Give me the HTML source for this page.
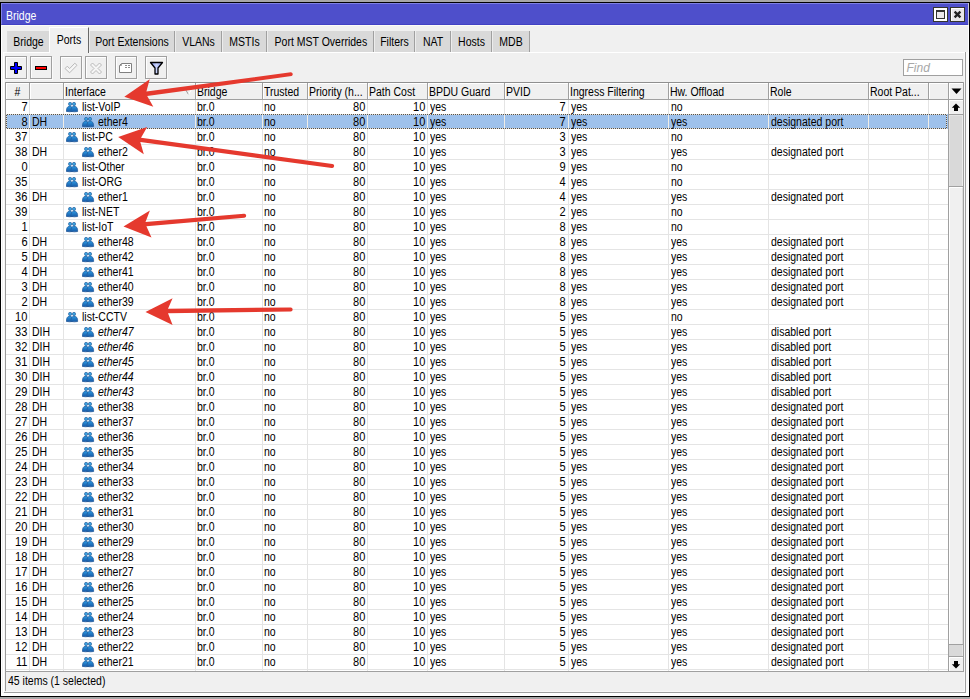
<!DOCTYPE html>
<html><head><meta charset="utf-8"><title>Bridge</title>
<style>
html,body{margin:0;padding:0}
body{width:970px;height:699px;overflow:hidden;background:#a7a7a7;position:relative;font:12px/15px "Liberation Sans",sans-serif;color:#000}
div,span,svg{position:absolute;box-sizing:border-box}
.t{white-space:nowrap;transform:scaleX(0.875);transform-origin:0 50%;line-height:15px;height:15px;top:1px}
.t.r{transform-origin:100% 50%}
.t.c{transform-origin:50% 50%}
.t.n{transform:scaleX(.92)}
#win{left:0;top:2px;width:970px;height:695px;background:#f0f0f0;border:1px solid #000}
#title{left:1px;top:3px;width:967px;height:22px;background:#4e4fcb;border-top:1px solid #7f81e3;border-left:1px solid #8284e6;border-bottom:1px solid #4141c3}
#title .t{color:#fff;top:5px;left:3.5px}
.wb{top:7px;width:15px;height:15px;border:1px solid #35352c;background:#fff}
.tab{top:31px;height:21px;background:#d9d9d9;border-right:1px solid #a0a0a0;border-left:1px solid #ececec}
.tab .t{top:4px;left:0;width:100%;text-align:center;transform-origin:50% 50%}
.tab.act{top:27px;height:26px;background:#f0f0f0;border-left:1px solid #fff;border-top:1px solid #fff;border-right:1px solid #696969}
.tab.act .t{top:5px}
.btn{top:56px;width:22px;height:23px;border:1px solid #a0a0a0;background:#f0f0f0;box-shadow:inset 1px 1px 0 #fff,1px 1px 0 #fafafa}
.btn svg{left:0;top:0}
.hl{left:6px;width:942px;height:1px;background:#e4e4e4}
.vl{top:100px;width:1px;height:571px;background:#e4e4e4}
.row{left:0;width:970px;height:15px}
.hc{top:83px;height:16px;background:#f0f0f0;border-top:1px solid #fff;border-left:1px solid #fff}
.hb{top:83px;width:1px;height:16px;background:#a0a0a0}
.ic{top:3px}
.i{font-style:italic}
#sel{left:6px;top:114px;width:942px;height:15px;background:#9ec1eb}
.dot{background-image:repeating-linear-gradient(90deg,#e6e0d4 0 1px,#505050 1px 2px)}
.dotv{background-image:repeating-linear-gradient(180deg,#e6e0d4 0 1px,#505050 1px 2px)}
</style></head><body>
<svg width="0" height="0" style="left:0;top:0"><defs>
<linearGradient id="g1" x1="0" y1="0" x2="0" y2="1"><stop offset="0" stop-color="#2d9ae2"/><stop offset="1" stop-color="#1759a6"/></linearGradient>
<linearGradient id="g2" x1="0" y1="0" x2="1" y2="0"><stop offset="0" stop-color="#7f92e8"/><stop offset=".5" stop-color="#c8d2fb"/><stop offset="1" stop-color="#7f92e8"/></linearGradient>
</defs></svg>
<div id="win"></div>
<div id="title"><span class="t">Bridge</span></div>

<div style="left:1px;top:25px;width:1px;height:671px;background:#fff"></div>
<div style="left:1px;top:25px;width:968px;height:1px;background:#fbfbf6"></div>
<div style="left:968px;top:3px;width:1px;height:22px;background:#c8c8d8"></div>
<div style="left:968px;top:25px;width:1px;height:671px;background:#fff"></div>
<div style="left:966px;top:52px;width:2px;height:643px;background:#f9f9f9"></div>
<div style="left:1px;top:693px;width:968px;height:3px;background:#fff"></div>
<div style="left:965px;top:52px;width:1px;height:641px;background:#a0a0a0"></div>
<div style="left:4px;top:692px;width:962px;height:1px;background:#a0a0a0"></div>
<div style="left:3px;top:52px;width:962px;height:1px;background:#fff"></div>
<div style="left:3px;top:52px;width:1px;height:640px;background:#fff"></div>
<div style="left:4px;top:53px;width:1px;height:639px;background:#f7f7f7"></div>
<div style="left:964px;top:53px;width:1px;height:639px;background:#f8f8f8"></div>
<div style="left:6px;top:691px;width:958px;height:1px;background:#f8f8f8"></div>
<div class="wb" style="left:933px"><div style="left:2px;top:2px;width:9px;height:9px;border:1px solid #333;border-top-width:2px;background:#ece9ec"></div></div>
<div class="wb" style="left:950px;background:#e9e7e9;box-shadow:inset 1px 1px 0 #fff"><svg width="13" height="13" style="left:0;top:0" viewBox="0 0 13 13"><path d="M3.6 3.6L9.4 9.4M9.4 3.6L3.6 9.4" stroke="#222" stroke-width="2.3" stroke-linecap="butt" fill="none"/></svg></div>
<div class="tab" style="left:7px;width:42px;border-right:0;border-left-color:#dbdbdb"><span class="t">Bridge</span></div>
<div class="tab act" style="left:49px;width:40px"><span class="t">Ports</span></div>
<div class="tab" style="left:89px;width:86px"><span class="t">Port Extensions</span></div>
<div class="tab" style="left:175px;width:47px"><span class="t">VLANs</span></div>
<div class="tab" style="left:222px;width:45px"><span class="t">MSTIs</span></div>
<div class="tab" style="left:267px;width:107px"><span class="t">Port MST Overrides</span></div>
<div class="tab" style="left:374px;width:41px"><span class="t">Filters</span></div>
<div class="tab" style="left:415px;width:36px"><span class="t">NAT</span></div>
<div class="tab" style="left:451px;width:41px"><span class="t">Hosts</span></div>
<div class="tab" style="left:492px;width:38px"><span class="t">MDB</span></div>
<div class="btn" style="left:5px"><svg width="20" height="21" viewBox="0 0 20 21"><path d="M8.5 5.5h3v4h4v3h-4v4h-3v-4h-4v-3h4z" fill="#0000ff" stroke="#000" stroke-width="1"/></svg></div>
<div class="btn" style="left:30px"><svg width="20" height="21" viewBox="0 0 20 21"><rect x="4.5" y="9.5" width="11" height="3" fill="#ff0000" stroke="#000" stroke-width="1"/></svg></div>
<div class="btn" style="left:60px"><svg width="20" height="21" viewBox="0 0 20 21"><path d="M4 11.5L6.3 9.2L8.6 11.6L13.8 6.2L16 8.3L8.6 15.8Z" fill="#f6f6f6" stroke="#b2b2b2" stroke-width=".9"/></svg></div>
<div class="btn" style="left:85px"><svg width="20" height="21" viewBox="0 0 20 21"><path d="M4.5 8l2-2 3.5 3.5 3.5-3.5 2 2-3.5 3.5 3.5 3.5-2 2-3.5-3.5-3.5 3.5-2-2 3.5-3.5z" fill="#f6f6f6" stroke="#b2b2b2" stroke-width=".9"/></svg></div>
<div class="btn" style="left:115px"><svg width="20" height="21" viewBox="0 0 20 21"><path d="M3.5 8.5l2-2h10v9h-12z" fill="#fff" stroke="#808080" stroke-width="1"/><path d="M3.5 8.5h2v-2" fill="none" stroke="#9a9a9a" stroke-width="1"/><path d="M9 8.5h2M12 8.5h2M9 10.5h2M12 10.5h2" stroke="#8c8c8c" stroke-width="1"/></svg></div>
<div class="btn" style="left:145px"><svg width="20" height="21" viewBox="0 0 20 21"><path d="M4.5 5.5h12l-4.5 5.5v6l-3 0v-6z" fill="url(#g2)" stroke="#000" stroke-width="1.3" stroke-linejoin="round"/></svg></div>
<div style="left:903px;top:59px;width:60px;height:17px;background:#fff;border:1px solid #a0a0a0"><span class="t i" style="left:2.5px;top:1px;color:#a8a8a8;transform:none">Find</span></div>
<div style="left:5px;top:82px;width:959px;height:1px;background:#8f8f8f"></div>
<div style="left:5px;top:82px;width:1px;height:609px;background:#9a9a9a"></div>
<div style="left:963px;top:82px;width:1px;height:590px;background:#a0a0a0"></div>
<div style="left:5px;top:671px;width:959px;height:1px;background:#a0a0a0"></div>
<div style="left:6px;top:100px;width:942px;height:571px;background:#fff"></div>
<div class="hc" style="left:6px;width:23px"></div>
<div class="hb" style="left:29px"></div>
<span class="t c" style="top:85px;left:6px;width:23px;text-align:center">#</span>
<div class="hc" style="left:30px;width:33px"></div>
<div class="hb" style="left:63px"></div>
<div class="hc" style="left:64px;width:131px"></div>
<div class="hb" style="left:195px"></div>
<span class="t" style="top:85px;left:65px">Interface</span>
<div class="hc" style="left:196px;width:66px"></div>
<div class="hb" style="left:262px"></div>
<span class="t" style="top:85px;left:197px">Bridge</span>
<div class="hc" style="left:263px;width:44px"></div>
<div class="hb" style="left:307px"></div>
<span class="t" style="top:85px;left:264px">Trusted</span>
<div class="hc" style="left:308px;width:59px"></div>
<div class="hb" style="left:367px"></div>
<span class="t" style="top:85px;left:309px">Priority (h...</span>
<div class="hc" style="left:368px;width:59px"></div>
<div class="hb" style="left:427px"></div>
<span class="t" style="top:85px;left:369px">Path Cost</span>
<div class="hc" style="left:428px;width:76px"></div>
<div class="hb" style="left:504px"></div>
<span class="t" style="top:85px;left:429px">BPDU Guard</span>
<div class="hc" style="left:505px;width:63px"></div>
<div class="hb" style="left:568px"></div>
<span class="t" style="top:85px;left:506px">PVID</span>
<div class="hc" style="left:569px;width:99px"></div>
<div class="hb" style="left:668px"></div>
<span class="t" style="top:85px;left:570px">Ingress Filtering</span>
<div class="hc" style="left:669px;width:99px"></div>
<div class="hb" style="left:768px"></div>
<span class="t" style="top:85px;left:670px">Hw. Offload</span>
<div class="hc" style="left:769px;width:99px"></div>
<div class="hb" style="left:868px"></div>
<span class="t" style="top:85px;left:770px">Role</span>
<div class="hc" style="left:869px;width:59px"></div>
<div class="hb" style="left:928px"></div>
<span class="t" style="top:85px;left:870px">Root Pat...</span>
<div class="hc" style="left:929px;width:19px"></div>
<div style="left:5px;top:99px;width:959px;height:1px;background:#a0a0a0"></div>
<svg style="left:185px;top:89px" width="8" height="6" viewBox="0 0 8 6"><path d="M.5 .5L3.5 5.5" stroke="#9a9a9a" fill="none"/><path d="M3.5 5.5L6.5 .5" stroke="#fff" fill="none"/><path d="M.5 .5H6.5" stroke="#9a9a9a"/></svg>
<div class="hl" style="top:144px"></div>
<div class="hl" style="top:159px"></div>
<div class="hl" style="top:174px"></div>
<div class="hl" style="top:189px"></div>
<div class="hl" style="top:204px"></div>
<div class="hl" style="top:219px"></div>
<div class="hl" style="top:234px"></div>
<div class="hl" style="top:249px"></div>
<div class="hl" style="top:264px"></div>
<div class="hl" style="top:279px"></div>
<div class="hl" style="top:294px"></div>
<div class="hl" style="top:309px"></div>
<div class="hl" style="top:324px"></div>
<div class="hl" style="top:339px"></div>
<div class="hl" style="top:354px"></div>
<div class="hl" style="top:369px"></div>
<div class="hl" style="top:384px"></div>
<div class="hl" style="top:399px"></div>
<div class="hl" style="top:414px"></div>
<div class="hl" style="top:429px"></div>
<div class="hl" style="top:444px"></div>
<div class="hl" style="top:459px"></div>
<div class="hl" style="top:474px"></div>
<div class="hl" style="top:489px"></div>
<div class="hl" style="top:504px"></div>
<div class="hl" style="top:519px"></div>
<div class="hl" style="top:534px"></div>
<div class="hl" style="top:549px"></div>
<div class="hl" style="top:564px"></div>
<div class="hl" style="top:579px"></div>
<div class="hl" style="top:594px"></div>
<div class="hl" style="top:609px"></div>
<div class="hl" style="top:624px"></div>
<div class="hl" style="top:639px"></div>
<div class="hl" style="top:654px"></div>
<div class="hl" style="top:669px"></div>
<div class="vl" style="left:29px"></div>
<div class="vl" style="left:63px"></div>
<div class="vl" style="left:195px"></div>
<div class="vl" style="left:262px"></div>
<div class="vl" style="left:307px"></div>
<div class="vl" style="left:367px"></div>
<div class="vl" style="left:427px"></div>
<div class="vl" style="left:504px"></div>
<div class="vl" style="left:568px"></div>
<div class="vl" style="left:668px"></div>
<div class="vl" style="left:768px"></div>
<div class="vl" style="left:868px"></div>
<div class="vl" style="left:928px"></div>
<div id="sel"></div>
<div style="left:29px;top:115px;width:1px;height:13px;background:#efece6"></div>
<div style="left:63px;top:115px;width:1px;height:13px;background:#efece6"></div>
<div style="left:195px;top:115px;width:1px;height:13px;background:#efece6"></div>
<div style="left:262px;top:115px;width:1px;height:13px;background:#efece6"></div>
<div style="left:307px;top:115px;width:1px;height:13px;background:#efece6"></div>
<div style="left:367px;top:115px;width:1px;height:13px;background:#efece6"></div>
<div style="left:427px;top:115px;width:1px;height:13px;background:#efece6"></div>
<div style="left:504px;top:115px;width:1px;height:13px;background:#efece6"></div>
<div style="left:568px;top:115px;width:1px;height:13px;background:#efece6"></div>
<div style="left:668px;top:115px;width:1px;height:13px;background:#efece6"></div>
<div style="left:768px;top:115px;width:1px;height:13px;background:#efece6"></div>
<div style="left:868px;top:115px;width:1px;height:13px;background:#efece6"></div>
<div style="left:928px;top:115px;width:1px;height:13px;background:#efece6"></div>
<div class="dot" style="left:6px;top:114px;width:941px;height:1px"></div>
<div class="dot" style="left:6px;top:128px;width:941px;height:1px"></div>
<div class="dotv" style="left:6px;top:114px;width:1px;height:15px"></div>
<div class="dotv" style="left:946px;top:114px;width:1px;height:15px"></div>
<div class="row" style="top:99px"><span class="t r n" style="right:942.4px">7</span><svg class="ic" style="left:66px" width="13" height="11" viewBox="0 0 13 11"><path d="M0.45 9.5C0.2 6.4 1.6 4 3.7 4S6.7 5.8 6.7 9.5Q3.5 10.1 0.45 9.4Z" fill="url(#g1)" stroke="#275c9b" stroke-width=".75"/><path d="M4.9 9.5C4.8 6.2 6 4 8.2 4S11.9 6.3 11.65 9.5Q8.3 10.2 4.9 9.4Z" fill="url(#g1)" stroke="#275c9b" stroke-width=".75"/><circle cx="4.1" cy="1.95" r="1.6" fill="#3aa6e2" stroke="#2a5f9f" stroke-width=".7"/><circle cx="8" cy="1.95" r="1.6" fill="#3aa6e2" stroke="#2a5f9f" stroke-width=".7"/></svg><span class="t " style="left:82px">list-VoIP</span><span class="t " style="left:197px">br.0</span><span class="t " style="left:264px">no</span><span class="t r n" style="right:605px">80</span><span class="t r n" style="right:544.6px">10</span><span class="t " style="left:430px">yes</span><span class="t r n" style="right:404px">7</span><span class="t " style="left:570.5px">yes</span><span class="t " style="left:670.5px">no</span></div>
<div class="row" style="top:114px"><span class="t r n" style="right:942.4px">8</span><span class="t " style="left:31.5px">DH</span><svg class="ic" style="left:82px" width="13" height="11" viewBox="0 0 13 11"><path d="M0.45 9.5C0.2 6.4 1.6 4 3.7 4S6.7 5.8 6.7 9.5Q3.5 10.1 0.45 9.4Z" fill="url(#g1)" stroke="#275c9b" stroke-width=".75"/><path d="M4.9 9.5C4.8 6.2 6 4 8.2 4S11.9 6.3 11.65 9.5Q8.3 10.2 4.9 9.4Z" fill="url(#g1)" stroke="#275c9b" stroke-width=".75"/><circle cx="4.1" cy="1.95" r="1.6" fill="#3aa6e2" stroke="#2a5f9f" stroke-width=".7"/><circle cx="8" cy="1.95" r="1.6" fill="#3aa6e2" stroke="#2a5f9f" stroke-width=".7"/></svg><span class="t " style="left:98px">ether4</span><span class="t " style="left:197px">br.0</span><span class="t " style="left:264px">no</span><span class="t r n" style="right:605px">80</span><span class="t r n" style="right:544.6px">10</span><span class="t " style="left:430px">yes</span><span class="t r n" style="right:404px">7</span><span class="t " style="left:570.5px">yes</span><span class="t " style="left:670.5px">yes</span><span class="t " style="left:771px">designated port</span></div>
<div class="row" style="top:129px"><span class="t r n" style="right:942.4px">37</span><svg class="ic" style="left:66px" width="13" height="11" viewBox="0 0 13 11"><path d="M0.45 9.5C0.2 6.4 1.6 4 3.7 4S6.7 5.8 6.7 9.5Q3.5 10.1 0.45 9.4Z" fill="url(#g1)" stroke="#275c9b" stroke-width=".75"/><path d="M4.9 9.5C4.8 6.2 6 4 8.2 4S11.9 6.3 11.65 9.5Q8.3 10.2 4.9 9.4Z" fill="url(#g1)" stroke="#275c9b" stroke-width=".75"/><circle cx="4.1" cy="1.95" r="1.6" fill="#3aa6e2" stroke="#2a5f9f" stroke-width=".7"/><circle cx="8" cy="1.95" r="1.6" fill="#3aa6e2" stroke="#2a5f9f" stroke-width=".7"/></svg><span class="t " style="left:82px">list-PC</span><span class="t " style="left:197px">br.0</span><span class="t " style="left:264px">no</span><span class="t r n" style="right:605px">80</span><span class="t r n" style="right:544.6px">10</span><span class="t " style="left:430px">yes</span><span class="t r n" style="right:404px">3</span><span class="t " style="left:570.5px">yes</span><span class="t " style="left:670.5px">no</span></div>
<div class="row" style="top:144px"><span class="t r n" style="right:942.4px">38</span><span class="t " style="left:31.5px">DH</span><svg class="ic" style="left:82px" width="13" height="11" viewBox="0 0 13 11"><path d="M0.45 9.5C0.2 6.4 1.6 4 3.7 4S6.7 5.8 6.7 9.5Q3.5 10.1 0.45 9.4Z" fill="url(#g1)" stroke="#275c9b" stroke-width=".75"/><path d="M4.9 9.5C4.8 6.2 6 4 8.2 4S11.9 6.3 11.65 9.5Q8.3 10.2 4.9 9.4Z" fill="url(#g1)" stroke="#275c9b" stroke-width=".75"/><circle cx="4.1" cy="1.95" r="1.6" fill="#3aa6e2" stroke="#2a5f9f" stroke-width=".7"/><circle cx="8" cy="1.95" r="1.6" fill="#3aa6e2" stroke="#2a5f9f" stroke-width=".7"/></svg><span class="t " style="left:98px">ether2</span><span class="t " style="left:197px">br.0</span><span class="t " style="left:264px">no</span><span class="t r n" style="right:605px">80</span><span class="t r n" style="right:544.6px">10</span><span class="t " style="left:430px">yes</span><span class="t r n" style="right:404px">3</span><span class="t " style="left:570.5px">yes</span><span class="t " style="left:670.5px">yes</span><span class="t " style="left:771px">designated port</span></div>
<div class="row" style="top:159px"><span class="t r n" style="right:942.4px">0</span><svg class="ic" style="left:66px" width="13" height="11" viewBox="0 0 13 11"><path d="M0.45 9.5C0.2 6.4 1.6 4 3.7 4S6.7 5.8 6.7 9.5Q3.5 10.1 0.45 9.4Z" fill="url(#g1)" stroke="#275c9b" stroke-width=".75"/><path d="M4.9 9.5C4.8 6.2 6 4 8.2 4S11.9 6.3 11.65 9.5Q8.3 10.2 4.9 9.4Z" fill="url(#g1)" stroke="#275c9b" stroke-width=".75"/><circle cx="4.1" cy="1.95" r="1.6" fill="#3aa6e2" stroke="#2a5f9f" stroke-width=".7"/><circle cx="8" cy="1.95" r="1.6" fill="#3aa6e2" stroke="#2a5f9f" stroke-width=".7"/></svg><span class="t " style="left:82px">list-Other</span><span class="t " style="left:197px">br.0</span><span class="t " style="left:264px">no</span><span class="t r n" style="right:605px">80</span><span class="t r n" style="right:544.6px">10</span><span class="t " style="left:430px">yes</span><span class="t r n" style="right:404px">9</span><span class="t " style="left:570.5px">yes</span><span class="t " style="left:670.5px">no</span></div>
<div class="row" style="top:174px"><span class="t r n" style="right:942.4px">35</span><svg class="ic" style="left:66px" width="13" height="11" viewBox="0 0 13 11"><path d="M0.45 9.5C0.2 6.4 1.6 4 3.7 4S6.7 5.8 6.7 9.5Q3.5 10.1 0.45 9.4Z" fill="url(#g1)" stroke="#275c9b" stroke-width=".75"/><path d="M4.9 9.5C4.8 6.2 6 4 8.2 4S11.9 6.3 11.65 9.5Q8.3 10.2 4.9 9.4Z" fill="url(#g1)" stroke="#275c9b" stroke-width=".75"/><circle cx="4.1" cy="1.95" r="1.6" fill="#3aa6e2" stroke="#2a5f9f" stroke-width=".7"/><circle cx="8" cy="1.95" r="1.6" fill="#3aa6e2" stroke="#2a5f9f" stroke-width=".7"/></svg><span class="t " style="left:82px">list-ORG</span><span class="t " style="left:197px">br.0</span><span class="t " style="left:264px">no</span><span class="t r n" style="right:605px">80</span><span class="t r n" style="right:544.6px">10</span><span class="t " style="left:430px">yes</span><span class="t r n" style="right:404px">4</span><span class="t " style="left:570.5px">yes</span><span class="t " style="left:670.5px">no</span></div>
<div class="row" style="top:189px"><span class="t r n" style="right:942.4px">36</span><span class="t " style="left:31.5px">DH</span><svg class="ic" style="left:82px" width="13" height="11" viewBox="0 0 13 11"><path d="M0.45 9.5C0.2 6.4 1.6 4 3.7 4S6.7 5.8 6.7 9.5Q3.5 10.1 0.45 9.4Z" fill="url(#g1)" stroke="#275c9b" stroke-width=".75"/><path d="M4.9 9.5C4.8 6.2 6 4 8.2 4S11.9 6.3 11.65 9.5Q8.3 10.2 4.9 9.4Z" fill="url(#g1)" stroke="#275c9b" stroke-width=".75"/><circle cx="4.1" cy="1.95" r="1.6" fill="#3aa6e2" stroke="#2a5f9f" stroke-width=".7"/><circle cx="8" cy="1.95" r="1.6" fill="#3aa6e2" stroke="#2a5f9f" stroke-width=".7"/></svg><span class="t " style="left:98px">ether1</span><span class="t " style="left:197px">br.0</span><span class="t " style="left:264px">no</span><span class="t r n" style="right:605px">80</span><span class="t r n" style="right:544.6px">10</span><span class="t " style="left:430px">yes</span><span class="t r n" style="right:404px">4</span><span class="t " style="left:570.5px">yes</span><span class="t " style="left:670.5px">yes</span><span class="t " style="left:771px">designated port</span></div>
<div class="row" style="top:204px"><span class="t r n" style="right:942.4px">39</span><svg class="ic" style="left:66px" width="13" height="11" viewBox="0 0 13 11"><path d="M0.45 9.5C0.2 6.4 1.6 4 3.7 4S6.7 5.8 6.7 9.5Q3.5 10.1 0.45 9.4Z" fill="url(#g1)" stroke="#275c9b" stroke-width=".75"/><path d="M4.9 9.5C4.8 6.2 6 4 8.2 4S11.9 6.3 11.65 9.5Q8.3 10.2 4.9 9.4Z" fill="url(#g1)" stroke="#275c9b" stroke-width=".75"/><circle cx="4.1" cy="1.95" r="1.6" fill="#3aa6e2" stroke="#2a5f9f" stroke-width=".7"/><circle cx="8" cy="1.95" r="1.6" fill="#3aa6e2" stroke="#2a5f9f" stroke-width=".7"/></svg><span class="t " style="left:82px">list-NET</span><span class="t " style="left:197px">br.0</span><span class="t " style="left:264px">no</span><span class="t r n" style="right:605px">80</span><span class="t r n" style="right:544.6px">10</span><span class="t " style="left:430px">yes</span><span class="t r n" style="right:404px">2</span><span class="t " style="left:570.5px">yes</span><span class="t " style="left:670.5px">no</span></div>
<div class="row" style="top:219px"><span class="t r n" style="right:942.4px">1</span><svg class="ic" style="left:66px" width="13" height="11" viewBox="0 0 13 11"><path d="M0.45 9.5C0.2 6.4 1.6 4 3.7 4S6.7 5.8 6.7 9.5Q3.5 10.1 0.45 9.4Z" fill="url(#g1)" stroke="#275c9b" stroke-width=".75"/><path d="M4.9 9.5C4.8 6.2 6 4 8.2 4S11.9 6.3 11.65 9.5Q8.3 10.2 4.9 9.4Z" fill="url(#g1)" stroke="#275c9b" stroke-width=".75"/><circle cx="4.1" cy="1.95" r="1.6" fill="#3aa6e2" stroke="#2a5f9f" stroke-width=".7"/><circle cx="8" cy="1.95" r="1.6" fill="#3aa6e2" stroke="#2a5f9f" stroke-width=".7"/></svg><span class="t " style="left:82px">list-IoT</span><span class="t " style="left:197px">br.0</span><span class="t " style="left:264px">no</span><span class="t r n" style="right:605px">80</span><span class="t r n" style="right:544.6px">10</span><span class="t " style="left:430px">yes</span><span class="t r n" style="right:404px">8</span><span class="t " style="left:570.5px">yes</span><span class="t " style="left:670.5px">no</span></div>
<div class="row" style="top:234px"><span class="t r n" style="right:942.4px">6</span><span class="t " style="left:31.5px">DH</span><svg class="ic" style="left:82px" width="13" height="11" viewBox="0 0 13 11"><path d="M0.45 9.5C0.2 6.4 1.6 4 3.7 4S6.7 5.8 6.7 9.5Q3.5 10.1 0.45 9.4Z" fill="url(#g1)" stroke="#275c9b" stroke-width=".75"/><path d="M4.9 9.5C4.8 6.2 6 4 8.2 4S11.9 6.3 11.65 9.5Q8.3 10.2 4.9 9.4Z" fill="url(#g1)" stroke="#275c9b" stroke-width=".75"/><circle cx="4.1" cy="1.95" r="1.6" fill="#3aa6e2" stroke="#2a5f9f" stroke-width=".7"/><circle cx="8" cy="1.95" r="1.6" fill="#3aa6e2" stroke="#2a5f9f" stroke-width=".7"/></svg><span class="t " style="left:98px">ether48</span><span class="t " style="left:197px">br.0</span><span class="t " style="left:264px">no</span><span class="t r n" style="right:605px">80</span><span class="t r n" style="right:544.6px">10</span><span class="t " style="left:430px">yes</span><span class="t r n" style="right:404px">8</span><span class="t " style="left:570.5px">yes</span><span class="t " style="left:670.5px">yes</span><span class="t " style="left:771px">designated port</span></div>
<div class="row" style="top:249px"><span class="t r n" style="right:942.4px">5</span><span class="t " style="left:31.5px">DH</span><svg class="ic" style="left:82px" width="13" height="11" viewBox="0 0 13 11"><path d="M0.45 9.5C0.2 6.4 1.6 4 3.7 4S6.7 5.8 6.7 9.5Q3.5 10.1 0.45 9.4Z" fill="url(#g1)" stroke="#275c9b" stroke-width=".75"/><path d="M4.9 9.5C4.8 6.2 6 4 8.2 4S11.9 6.3 11.65 9.5Q8.3 10.2 4.9 9.4Z" fill="url(#g1)" stroke="#275c9b" stroke-width=".75"/><circle cx="4.1" cy="1.95" r="1.6" fill="#3aa6e2" stroke="#2a5f9f" stroke-width=".7"/><circle cx="8" cy="1.95" r="1.6" fill="#3aa6e2" stroke="#2a5f9f" stroke-width=".7"/></svg><span class="t " style="left:98px">ether42</span><span class="t " style="left:197px">br.0</span><span class="t " style="left:264px">no</span><span class="t r n" style="right:605px">80</span><span class="t r n" style="right:544.6px">10</span><span class="t " style="left:430px">yes</span><span class="t r n" style="right:404px">8</span><span class="t " style="left:570.5px">yes</span><span class="t " style="left:670.5px">yes</span><span class="t " style="left:771px">designated port</span></div>
<div class="row" style="top:264px"><span class="t r n" style="right:942.4px">4</span><span class="t " style="left:31.5px">DH</span><svg class="ic" style="left:82px" width="13" height="11" viewBox="0 0 13 11"><path d="M0.45 9.5C0.2 6.4 1.6 4 3.7 4S6.7 5.8 6.7 9.5Q3.5 10.1 0.45 9.4Z" fill="url(#g1)" stroke="#275c9b" stroke-width=".75"/><path d="M4.9 9.5C4.8 6.2 6 4 8.2 4S11.9 6.3 11.65 9.5Q8.3 10.2 4.9 9.4Z" fill="url(#g1)" stroke="#275c9b" stroke-width=".75"/><circle cx="4.1" cy="1.95" r="1.6" fill="#3aa6e2" stroke="#2a5f9f" stroke-width=".7"/><circle cx="8" cy="1.95" r="1.6" fill="#3aa6e2" stroke="#2a5f9f" stroke-width=".7"/></svg><span class="t " style="left:98px">ether41</span><span class="t " style="left:197px">br.0</span><span class="t " style="left:264px">no</span><span class="t r n" style="right:605px">80</span><span class="t r n" style="right:544.6px">10</span><span class="t " style="left:430px">yes</span><span class="t r n" style="right:404px">8</span><span class="t " style="left:570.5px">yes</span><span class="t " style="left:670.5px">yes</span><span class="t " style="left:771px">designated port</span></div>
<div class="row" style="top:279px"><span class="t r n" style="right:942.4px">3</span><span class="t " style="left:31.5px">DH</span><svg class="ic" style="left:82px" width="13" height="11" viewBox="0 0 13 11"><path d="M0.45 9.5C0.2 6.4 1.6 4 3.7 4S6.7 5.8 6.7 9.5Q3.5 10.1 0.45 9.4Z" fill="url(#g1)" stroke="#275c9b" stroke-width=".75"/><path d="M4.9 9.5C4.8 6.2 6 4 8.2 4S11.9 6.3 11.65 9.5Q8.3 10.2 4.9 9.4Z" fill="url(#g1)" stroke="#275c9b" stroke-width=".75"/><circle cx="4.1" cy="1.95" r="1.6" fill="#3aa6e2" stroke="#2a5f9f" stroke-width=".7"/><circle cx="8" cy="1.95" r="1.6" fill="#3aa6e2" stroke="#2a5f9f" stroke-width=".7"/></svg><span class="t " style="left:98px">ether40</span><span class="t " style="left:197px">br.0</span><span class="t " style="left:264px">no</span><span class="t r n" style="right:605px">80</span><span class="t r n" style="right:544.6px">10</span><span class="t " style="left:430px">yes</span><span class="t r n" style="right:404px">8</span><span class="t " style="left:570.5px">yes</span><span class="t " style="left:670.5px">yes</span><span class="t " style="left:771px">designated port</span></div>
<div class="row" style="top:294px"><span class="t r n" style="right:942.4px">2</span><span class="t " style="left:31.5px">DH</span><svg class="ic" style="left:82px" width="13" height="11" viewBox="0 0 13 11"><path d="M0.45 9.5C0.2 6.4 1.6 4 3.7 4S6.7 5.8 6.7 9.5Q3.5 10.1 0.45 9.4Z" fill="url(#g1)" stroke="#275c9b" stroke-width=".75"/><path d="M4.9 9.5C4.8 6.2 6 4 8.2 4S11.9 6.3 11.65 9.5Q8.3 10.2 4.9 9.4Z" fill="url(#g1)" stroke="#275c9b" stroke-width=".75"/><circle cx="4.1" cy="1.95" r="1.6" fill="#3aa6e2" stroke="#2a5f9f" stroke-width=".7"/><circle cx="8" cy="1.95" r="1.6" fill="#3aa6e2" stroke="#2a5f9f" stroke-width=".7"/></svg><span class="t " style="left:98px">ether39</span><span class="t " style="left:197px">br.0</span><span class="t " style="left:264px">no</span><span class="t r n" style="right:605px">80</span><span class="t r n" style="right:544.6px">10</span><span class="t " style="left:430px">yes</span><span class="t r n" style="right:404px">8</span><span class="t " style="left:570.5px">yes</span><span class="t " style="left:670.5px">yes</span><span class="t " style="left:771px">designated port</span></div>
<div class="row" style="top:309px"><span class="t r n" style="right:942.4px">10</span><svg class="ic" style="left:66px" width="13" height="11" viewBox="0 0 13 11"><path d="M0.45 9.5C0.2 6.4 1.6 4 3.7 4S6.7 5.8 6.7 9.5Q3.5 10.1 0.45 9.4Z" fill="url(#g1)" stroke="#275c9b" stroke-width=".75"/><path d="M4.9 9.5C4.8 6.2 6 4 8.2 4S11.9 6.3 11.65 9.5Q8.3 10.2 4.9 9.4Z" fill="url(#g1)" stroke="#275c9b" stroke-width=".75"/><circle cx="4.1" cy="1.95" r="1.6" fill="#3aa6e2" stroke="#2a5f9f" stroke-width=".7"/><circle cx="8" cy="1.95" r="1.6" fill="#3aa6e2" stroke="#2a5f9f" stroke-width=".7"/></svg><span class="t " style="left:82px">list-CCTV</span><span class="t " style="left:197px">br.0</span><span class="t " style="left:264px">no</span><span class="t r n" style="right:605px">80</span><span class="t r n" style="right:544.6px">10</span><span class="t " style="left:430px">yes</span><span class="t r n" style="right:404px">5</span><span class="t " style="left:570.5px">yes</span><span class="t " style="left:670.5px">no</span></div>
<div class="row" style="top:324px"><span class="t r n" style="right:942.4px">33</span><span class="t " style="left:31.5px">DIH</span><svg class="ic" style="left:82px" width="13" height="11" viewBox="0 0 13 11"><path d="M0.45 9.5C0.2 6.4 1.6 4 3.7 4S6.7 5.8 6.7 9.5Q3.5 10.1 0.45 9.4Z" fill="url(#g1)" stroke="#275c9b" stroke-width=".75"/><path d="M4.9 9.5C4.8 6.2 6 4 8.2 4S11.9 6.3 11.65 9.5Q8.3 10.2 4.9 9.4Z" fill="url(#g1)" stroke="#275c9b" stroke-width=".75"/><circle cx="4.1" cy="1.95" r="1.6" fill="#3aa6e2" stroke="#2a5f9f" stroke-width=".7"/><circle cx="8" cy="1.95" r="1.6" fill="#3aa6e2" stroke="#2a5f9f" stroke-width=".7"/></svg><span class="t i" style="left:98px">ether47</span><span class="t " style="left:197px">br.0</span><span class="t " style="left:264px">no</span><span class="t r n" style="right:605px">80</span><span class="t r n" style="right:544.6px">10</span><span class="t " style="left:430px">yes</span><span class="t r n" style="right:404px">5</span><span class="t " style="left:570.5px">yes</span><span class="t " style="left:670.5px">yes</span><span class="t " style="left:771px">disabled port</span></div>
<div class="row" style="top:339px"><span class="t r n" style="right:942.4px">32</span><span class="t " style="left:31.5px">DIH</span><svg class="ic" style="left:82px" width="13" height="11" viewBox="0 0 13 11"><path d="M0.45 9.5C0.2 6.4 1.6 4 3.7 4S6.7 5.8 6.7 9.5Q3.5 10.1 0.45 9.4Z" fill="url(#g1)" stroke="#275c9b" stroke-width=".75"/><path d="M4.9 9.5C4.8 6.2 6 4 8.2 4S11.9 6.3 11.65 9.5Q8.3 10.2 4.9 9.4Z" fill="url(#g1)" stroke="#275c9b" stroke-width=".75"/><circle cx="4.1" cy="1.95" r="1.6" fill="#3aa6e2" stroke="#2a5f9f" stroke-width=".7"/><circle cx="8" cy="1.95" r="1.6" fill="#3aa6e2" stroke="#2a5f9f" stroke-width=".7"/></svg><span class="t i" style="left:98px">ether46</span><span class="t " style="left:197px">br.0</span><span class="t " style="left:264px">no</span><span class="t r n" style="right:605px">80</span><span class="t r n" style="right:544.6px">10</span><span class="t " style="left:430px">yes</span><span class="t r n" style="right:404px">5</span><span class="t " style="left:570.5px">yes</span><span class="t " style="left:670.5px">yes</span><span class="t " style="left:771px">disabled port</span></div>
<div class="row" style="top:354px"><span class="t r n" style="right:942.4px">31</span><span class="t " style="left:31.5px">DIH</span><svg class="ic" style="left:82px" width="13" height="11" viewBox="0 0 13 11"><path d="M0.45 9.5C0.2 6.4 1.6 4 3.7 4S6.7 5.8 6.7 9.5Q3.5 10.1 0.45 9.4Z" fill="url(#g1)" stroke="#275c9b" stroke-width=".75"/><path d="M4.9 9.5C4.8 6.2 6 4 8.2 4S11.9 6.3 11.65 9.5Q8.3 10.2 4.9 9.4Z" fill="url(#g1)" stroke="#275c9b" stroke-width=".75"/><circle cx="4.1" cy="1.95" r="1.6" fill="#3aa6e2" stroke="#2a5f9f" stroke-width=".7"/><circle cx="8" cy="1.95" r="1.6" fill="#3aa6e2" stroke="#2a5f9f" stroke-width=".7"/></svg><span class="t i" style="left:98px">ether45</span><span class="t " style="left:197px">br.0</span><span class="t " style="left:264px">no</span><span class="t r n" style="right:605px">80</span><span class="t r n" style="right:544.6px">10</span><span class="t " style="left:430px">yes</span><span class="t r n" style="right:404px">5</span><span class="t " style="left:570.5px">yes</span><span class="t " style="left:670.5px">yes</span><span class="t " style="left:771px">disabled port</span></div>
<div class="row" style="top:369px"><span class="t r n" style="right:942.4px">30</span><span class="t " style="left:31.5px">DIH</span><svg class="ic" style="left:82px" width="13" height="11" viewBox="0 0 13 11"><path d="M0.45 9.5C0.2 6.4 1.6 4 3.7 4S6.7 5.8 6.7 9.5Q3.5 10.1 0.45 9.4Z" fill="url(#g1)" stroke="#275c9b" stroke-width=".75"/><path d="M4.9 9.5C4.8 6.2 6 4 8.2 4S11.9 6.3 11.65 9.5Q8.3 10.2 4.9 9.4Z" fill="url(#g1)" stroke="#275c9b" stroke-width=".75"/><circle cx="4.1" cy="1.95" r="1.6" fill="#3aa6e2" stroke="#2a5f9f" stroke-width=".7"/><circle cx="8" cy="1.95" r="1.6" fill="#3aa6e2" stroke="#2a5f9f" stroke-width=".7"/></svg><span class="t i" style="left:98px">ether44</span><span class="t " style="left:197px">br.0</span><span class="t " style="left:264px">no</span><span class="t r n" style="right:605px">80</span><span class="t r n" style="right:544.6px">10</span><span class="t " style="left:430px">yes</span><span class="t r n" style="right:404px">5</span><span class="t " style="left:570.5px">yes</span><span class="t " style="left:670.5px">yes</span><span class="t " style="left:771px">disabled port</span></div>
<div class="row" style="top:384px"><span class="t r n" style="right:942.4px">29</span><span class="t " style="left:31.5px">DIH</span><svg class="ic" style="left:82px" width="13" height="11" viewBox="0 0 13 11"><path d="M0.45 9.5C0.2 6.4 1.6 4 3.7 4S6.7 5.8 6.7 9.5Q3.5 10.1 0.45 9.4Z" fill="url(#g1)" stroke="#275c9b" stroke-width=".75"/><path d="M4.9 9.5C4.8 6.2 6 4 8.2 4S11.9 6.3 11.65 9.5Q8.3 10.2 4.9 9.4Z" fill="url(#g1)" stroke="#275c9b" stroke-width=".75"/><circle cx="4.1" cy="1.95" r="1.6" fill="#3aa6e2" stroke="#2a5f9f" stroke-width=".7"/><circle cx="8" cy="1.95" r="1.6" fill="#3aa6e2" stroke="#2a5f9f" stroke-width=".7"/></svg><span class="t i" style="left:98px">ether43</span><span class="t " style="left:197px">br.0</span><span class="t " style="left:264px">no</span><span class="t r n" style="right:605px">80</span><span class="t r n" style="right:544.6px">10</span><span class="t " style="left:430px">yes</span><span class="t r n" style="right:404px">5</span><span class="t " style="left:570.5px">yes</span><span class="t " style="left:670.5px">yes</span><span class="t " style="left:771px">disabled port</span></div>
<div class="row" style="top:399px"><span class="t r n" style="right:942.4px">28</span><span class="t " style="left:31.5px">DH</span><svg class="ic" style="left:82px" width="13" height="11" viewBox="0 0 13 11"><path d="M0.45 9.5C0.2 6.4 1.6 4 3.7 4S6.7 5.8 6.7 9.5Q3.5 10.1 0.45 9.4Z" fill="url(#g1)" stroke="#275c9b" stroke-width=".75"/><path d="M4.9 9.5C4.8 6.2 6 4 8.2 4S11.9 6.3 11.65 9.5Q8.3 10.2 4.9 9.4Z" fill="url(#g1)" stroke="#275c9b" stroke-width=".75"/><circle cx="4.1" cy="1.95" r="1.6" fill="#3aa6e2" stroke="#2a5f9f" stroke-width=".7"/><circle cx="8" cy="1.95" r="1.6" fill="#3aa6e2" stroke="#2a5f9f" stroke-width=".7"/></svg><span class="t " style="left:98px">ether38</span><span class="t " style="left:197px">br.0</span><span class="t " style="left:264px">no</span><span class="t r n" style="right:605px">80</span><span class="t r n" style="right:544.6px">10</span><span class="t " style="left:430px">yes</span><span class="t r n" style="right:404px">5</span><span class="t " style="left:570.5px">yes</span><span class="t " style="left:670.5px">yes</span><span class="t " style="left:771px">designated port</span></div>
<div class="row" style="top:414px"><span class="t r n" style="right:942.4px">27</span><span class="t " style="left:31.5px">DH</span><svg class="ic" style="left:82px" width="13" height="11" viewBox="0 0 13 11"><path d="M0.45 9.5C0.2 6.4 1.6 4 3.7 4S6.7 5.8 6.7 9.5Q3.5 10.1 0.45 9.4Z" fill="url(#g1)" stroke="#275c9b" stroke-width=".75"/><path d="M4.9 9.5C4.8 6.2 6 4 8.2 4S11.9 6.3 11.65 9.5Q8.3 10.2 4.9 9.4Z" fill="url(#g1)" stroke="#275c9b" stroke-width=".75"/><circle cx="4.1" cy="1.95" r="1.6" fill="#3aa6e2" stroke="#2a5f9f" stroke-width=".7"/><circle cx="8" cy="1.95" r="1.6" fill="#3aa6e2" stroke="#2a5f9f" stroke-width=".7"/></svg><span class="t " style="left:98px">ether37</span><span class="t " style="left:197px">br.0</span><span class="t " style="left:264px">no</span><span class="t r n" style="right:605px">80</span><span class="t r n" style="right:544.6px">10</span><span class="t " style="left:430px">yes</span><span class="t r n" style="right:404px">5</span><span class="t " style="left:570.5px">yes</span><span class="t " style="left:670.5px">yes</span><span class="t " style="left:771px">designated port</span></div>
<div class="row" style="top:429px"><span class="t r n" style="right:942.4px">26</span><span class="t " style="left:31.5px">DH</span><svg class="ic" style="left:82px" width="13" height="11" viewBox="0 0 13 11"><path d="M0.45 9.5C0.2 6.4 1.6 4 3.7 4S6.7 5.8 6.7 9.5Q3.5 10.1 0.45 9.4Z" fill="url(#g1)" stroke="#275c9b" stroke-width=".75"/><path d="M4.9 9.5C4.8 6.2 6 4 8.2 4S11.9 6.3 11.65 9.5Q8.3 10.2 4.9 9.4Z" fill="url(#g1)" stroke="#275c9b" stroke-width=".75"/><circle cx="4.1" cy="1.95" r="1.6" fill="#3aa6e2" stroke="#2a5f9f" stroke-width=".7"/><circle cx="8" cy="1.95" r="1.6" fill="#3aa6e2" stroke="#2a5f9f" stroke-width=".7"/></svg><span class="t " style="left:98px">ether36</span><span class="t " style="left:197px">br.0</span><span class="t " style="left:264px">no</span><span class="t r n" style="right:605px">80</span><span class="t r n" style="right:544.6px">10</span><span class="t " style="left:430px">yes</span><span class="t r n" style="right:404px">5</span><span class="t " style="left:570.5px">yes</span><span class="t " style="left:670.5px">yes</span><span class="t " style="left:771px">designated port</span></div>
<div class="row" style="top:444px"><span class="t r n" style="right:942.4px">25</span><span class="t " style="left:31.5px">DH</span><svg class="ic" style="left:82px" width="13" height="11" viewBox="0 0 13 11"><path d="M0.45 9.5C0.2 6.4 1.6 4 3.7 4S6.7 5.8 6.7 9.5Q3.5 10.1 0.45 9.4Z" fill="url(#g1)" stroke="#275c9b" stroke-width=".75"/><path d="M4.9 9.5C4.8 6.2 6 4 8.2 4S11.9 6.3 11.65 9.5Q8.3 10.2 4.9 9.4Z" fill="url(#g1)" stroke="#275c9b" stroke-width=".75"/><circle cx="4.1" cy="1.95" r="1.6" fill="#3aa6e2" stroke="#2a5f9f" stroke-width=".7"/><circle cx="8" cy="1.95" r="1.6" fill="#3aa6e2" stroke="#2a5f9f" stroke-width=".7"/></svg><span class="t " style="left:98px">ether35</span><span class="t " style="left:197px">br.0</span><span class="t " style="left:264px">no</span><span class="t r n" style="right:605px">80</span><span class="t r n" style="right:544.6px">10</span><span class="t " style="left:430px">yes</span><span class="t r n" style="right:404px">5</span><span class="t " style="left:570.5px">yes</span><span class="t " style="left:670.5px">yes</span><span class="t " style="left:771px">designated port</span></div>
<div class="row" style="top:459px"><span class="t r n" style="right:942.4px">24</span><span class="t " style="left:31.5px">DH</span><svg class="ic" style="left:82px" width="13" height="11" viewBox="0 0 13 11"><path d="M0.45 9.5C0.2 6.4 1.6 4 3.7 4S6.7 5.8 6.7 9.5Q3.5 10.1 0.45 9.4Z" fill="url(#g1)" stroke="#275c9b" stroke-width=".75"/><path d="M4.9 9.5C4.8 6.2 6 4 8.2 4S11.9 6.3 11.65 9.5Q8.3 10.2 4.9 9.4Z" fill="url(#g1)" stroke="#275c9b" stroke-width=".75"/><circle cx="4.1" cy="1.95" r="1.6" fill="#3aa6e2" stroke="#2a5f9f" stroke-width=".7"/><circle cx="8" cy="1.95" r="1.6" fill="#3aa6e2" stroke="#2a5f9f" stroke-width=".7"/></svg><span class="t " style="left:98px">ether34</span><span class="t " style="left:197px">br.0</span><span class="t " style="left:264px">no</span><span class="t r n" style="right:605px">80</span><span class="t r n" style="right:544.6px">10</span><span class="t " style="left:430px">yes</span><span class="t r n" style="right:404px">5</span><span class="t " style="left:570.5px">yes</span><span class="t " style="left:670.5px">yes</span><span class="t " style="left:771px">designated port</span></div>
<div class="row" style="top:474px"><span class="t r n" style="right:942.4px">23</span><span class="t " style="left:31.5px">DH</span><svg class="ic" style="left:82px" width="13" height="11" viewBox="0 0 13 11"><path d="M0.45 9.5C0.2 6.4 1.6 4 3.7 4S6.7 5.8 6.7 9.5Q3.5 10.1 0.45 9.4Z" fill="url(#g1)" stroke="#275c9b" stroke-width=".75"/><path d="M4.9 9.5C4.8 6.2 6 4 8.2 4S11.9 6.3 11.65 9.5Q8.3 10.2 4.9 9.4Z" fill="url(#g1)" stroke="#275c9b" stroke-width=".75"/><circle cx="4.1" cy="1.95" r="1.6" fill="#3aa6e2" stroke="#2a5f9f" stroke-width=".7"/><circle cx="8" cy="1.95" r="1.6" fill="#3aa6e2" stroke="#2a5f9f" stroke-width=".7"/></svg><span class="t " style="left:98px">ether33</span><span class="t " style="left:197px">br.0</span><span class="t " style="left:264px">no</span><span class="t r n" style="right:605px">80</span><span class="t r n" style="right:544.6px">10</span><span class="t " style="left:430px">yes</span><span class="t r n" style="right:404px">5</span><span class="t " style="left:570.5px">yes</span><span class="t " style="left:670.5px">yes</span><span class="t " style="left:771px">designated port</span></div>
<div class="row" style="top:489px"><span class="t r n" style="right:942.4px">22</span><span class="t " style="left:31.5px">DH</span><svg class="ic" style="left:82px" width="13" height="11" viewBox="0 0 13 11"><path d="M0.45 9.5C0.2 6.4 1.6 4 3.7 4S6.7 5.8 6.7 9.5Q3.5 10.1 0.45 9.4Z" fill="url(#g1)" stroke="#275c9b" stroke-width=".75"/><path d="M4.9 9.5C4.8 6.2 6 4 8.2 4S11.9 6.3 11.65 9.5Q8.3 10.2 4.9 9.4Z" fill="url(#g1)" stroke="#275c9b" stroke-width=".75"/><circle cx="4.1" cy="1.95" r="1.6" fill="#3aa6e2" stroke="#2a5f9f" stroke-width=".7"/><circle cx="8" cy="1.95" r="1.6" fill="#3aa6e2" stroke="#2a5f9f" stroke-width=".7"/></svg><span class="t " style="left:98px">ether32</span><span class="t " style="left:197px">br.0</span><span class="t " style="left:264px">no</span><span class="t r n" style="right:605px">80</span><span class="t r n" style="right:544.6px">10</span><span class="t " style="left:430px">yes</span><span class="t r n" style="right:404px">5</span><span class="t " style="left:570.5px">yes</span><span class="t " style="left:670.5px">yes</span><span class="t " style="left:771px">designated port</span></div>
<div class="row" style="top:504px"><span class="t r n" style="right:942.4px">21</span><span class="t " style="left:31.5px">DH</span><svg class="ic" style="left:82px" width="13" height="11" viewBox="0 0 13 11"><path d="M0.45 9.5C0.2 6.4 1.6 4 3.7 4S6.7 5.8 6.7 9.5Q3.5 10.1 0.45 9.4Z" fill="url(#g1)" stroke="#275c9b" stroke-width=".75"/><path d="M4.9 9.5C4.8 6.2 6 4 8.2 4S11.9 6.3 11.65 9.5Q8.3 10.2 4.9 9.4Z" fill="url(#g1)" stroke="#275c9b" stroke-width=".75"/><circle cx="4.1" cy="1.95" r="1.6" fill="#3aa6e2" stroke="#2a5f9f" stroke-width=".7"/><circle cx="8" cy="1.95" r="1.6" fill="#3aa6e2" stroke="#2a5f9f" stroke-width=".7"/></svg><span class="t " style="left:98px">ether31</span><span class="t " style="left:197px">br.0</span><span class="t " style="left:264px">no</span><span class="t r n" style="right:605px">80</span><span class="t r n" style="right:544.6px">10</span><span class="t " style="left:430px">yes</span><span class="t r n" style="right:404px">5</span><span class="t " style="left:570.5px">yes</span><span class="t " style="left:670.5px">yes</span><span class="t " style="left:771px">designated port</span></div>
<div class="row" style="top:519px"><span class="t r n" style="right:942.4px">20</span><span class="t " style="left:31.5px">DH</span><svg class="ic" style="left:82px" width="13" height="11" viewBox="0 0 13 11"><path d="M0.45 9.5C0.2 6.4 1.6 4 3.7 4S6.7 5.8 6.7 9.5Q3.5 10.1 0.45 9.4Z" fill="url(#g1)" stroke="#275c9b" stroke-width=".75"/><path d="M4.9 9.5C4.8 6.2 6 4 8.2 4S11.9 6.3 11.65 9.5Q8.3 10.2 4.9 9.4Z" fill="url(#g1)" stroke="#275c9b" stroke-width=".75"/><circle cx="4.1" cy="1.95" r="1.6" fill="#3aa6e2" stroke="#2a5f9f" stroke-width=".7"/><circle cx="8" cy="1.95" r="1.6" fill="#3aa6e2" stroke="#2a5f9f" stroke-width=".7"/></svg><span class="t " style="left:98px">ether30</span><span class="t " style="left:197px">br.0</span><span class="t " style="left:264px">no</span><span class="t r n" style="right:605px">80</span><span class="t r n" style="right:544.6px">10</span><span class="t " style="left:430px">yes</span><span class="t r n" style="right:404px">5</span><span class="t " style="left:570.5px">yes</span><span class="t " style="left:670.5px">yes</span><span class="t " style="left:771px">designated port</span></div>
<div class="row" style="top:534px"><span class="t r n" style="right:942.4px">19</span><span class="t " style="left:31.5px">DH</span><svg class="ic" style="left:82px" width="13" height="11" viewBox="0 0 13 11"><path d="M0.45 9.5C0.2 6.4 1.6 4 3.7 4S6.7 5.8 6.7 9.5Q3.5 10.1 0.45 9.4Z" fill="url(#g1)" stroke="#275c9b" stroke-width=".75"/><path d="M4.9 9.5C4.8 6.2 6 4 8.2 4S11.9 6.3 11.65 9.5Q8.3 10.2 4.9 9.4Z" fill="url(#g1)" stroke="#275c9b" stroke-width=".75"/><circle cx="4.1" cy="1.95" r="1.6" fill="#3aa6e2" stroke="#2a5f9f" stroke-width=".7"/><circle cx="8" cy="1.95" r="1.6" fill="#3aa6e2" stroke="#2a5f9f" stroke-width=".7"/></svg><span class="t " style="left:98px">ether29</span><span class="t " style="left:197px">br.0</span><span class="t " style="left:264px">no</span><span class="t r n" style="right:605px">80</span><span class="t r n" style="right:544.6px">10</span><span class="t " style="left:430px">yes</span><span class="t r n" style="right:404px">5</span><span class="t " style="left:570.5px">yes</span><span class="t " style="left:670.5px">yes</span><span class="t " style="left:771px">designated port</span></div>
<div class="row" style="top:549px"><span class="t r n" style="right:942.4px">18</span><span class="t " style="left:31.5px">DH</span><svg class="ic" style="left:82px" width="13" height="11" viewBox="0 0 13 11"><path d="M0.45 9.5C0.2 6.4 1.6 4 3.7 4S6.7 5.8 6.7 9.5Q3.5 10.1 0.45 9.4Z" fill="url(#g1)" stroke="#275c9b" stroke-width=".75"/><path d="M4.9 9.5C4.8 6.2 6 4 8.2 4S11.9 6.3 11.65 9.5Q8.3 10.2 4.9 9.4Z" fill="url(#g1)" stroke="#275c9b" stroke-width=".75"/><circle cx="4.1" cy="1.95" r="1.6" fill="#3aa6e2" stroke="#2a5f9f" stroke-width=".7"/><circle cx="8" cy="1.95" r="1.6" fill="#3aa6e2" stroke="#2a5f9f" stroke-width=".7"/></svg><span class="t " style="left:98px">ether28</span><span class="t " style="left:197px">br.0</span><span class="t " style="left:264px">no</span><span class="t r n" style="right:605px">80</span><span class="t r n" style="right:544.6px">10</span><span class="t " style="left:430px">yes</span><span class="t r n" style="right:404px">5</span><span class="t " style="left:570.5px">yes</span><span class="t " style="left:670.5px">yes</span><span class="t " style="left:771px">designated port</span></div>
<div class="row" style="top:564px"><span class="t r n" style="right:942.4px">17</span><span class="t " style="left:31.5px">DH</span><svg class="ic" style="left:82px" width="13" height="11" viewBox="0 0 13 11"><path d="M0.45 9.5C0.2 6.4 1.6 4 3.7 4S6.7 5.8 6.7 9.5Q3.5 10.1 0.45 9.4Z" fill="url(#g1)" stroke="#275c9b" stroke-width=".75"/><path d="M4.9 9.5C4.8 6.2 6 4 8.2 4S11.9 6.3 11.65 9.5Q8.3 10.2 4.9 9.4Z" fill="url(#g1)" stroke="#275c9b" stroke-width=".75"/><circle cx="4.1" cy="1.95" r="1.6" fill="#3aa6e2" stroke="#2a5f9f" stroke-width=".7"/><circle cx="8" cy="1.95" r="1.6" fill="#3aa6e2" stroke="#2a5f9f" stroke-width=".7"/></svg><span class="t " style="left:98px">ether27</span><span class="t " style="left:197px">br.0</span><span class="t " style="left:264px">no</span><span class="t r n" style="right:605px">80</span><span class="t r n" style="right:544.6px">10</span><span class="t " style="left:430px">yes</span><span class="t r n" style="right:404px">5</span><span class="t " style="left:570.5px">yes</span><span class="t " style="left:670.5px">yes</span><span class="t " style="left:771px">designated port</span></div>
<div class="row" style="top:579px"><span class="t r n" style="right:942.4px">16</span><span class="t " style="left:31.5px">DH</span><svg class="ic" style="left:82px" width="13" height="11" viewBox="0 0 13 11"><path d="M0.45 9.5C0.2 6.4 1.6 4 3.7 4S6.7 5.8 6.7 9.5Q3.5 10.1 0.45 9.4Z" fill="url(#g1)" stroke="#275c9b" stroke-width=".75"/><path d="M4.9 9.5C4.8 6.2 6 4 8.2 4S11.9 6.3 11.65 9.5Q8.3 10.2 4.9 9.4Z" fill="url(#g1)" stroke="#275c9b" stroke-width=".75"/><circle cx="4.1" cy="1.95" r="1.6" fill="#3aa6e2" stroke="#2a5f9f" stroke-width=".7"/><circle cx="8" cy="1.95" r="1.6" fill="#3aa6e2" stroke="#2a5f9f" stroke-width=".7"/></svg><span class="t " style="left:98px">ether26</span><span class="t " style="left:197px">br.0</span><span class="t " style="left:264px">no</span><span class="t r n" style="right:605px">80</span><span class="t r n" style="right:544.6px">10</span><span class="t " style="left:430px">yes</span><span class="t r n" style="right:404px">5</span><span class="t " style="left:570.5px">yes</span><span class="t " style="left:670.5px">yes</span><span class="t " style="left:771px">designated port</span></div>
<div class="row" style="top:594px"><span class="t r n" style="right:942.4px">15</span><span class="t " style="left:31.5px">DH</span><svg class="ic" style="left:82px" width="13" height="11" viewBox="0 0 13 11"><path d="M0.45 9.5C0.2 6.4 1.6 4 3.7 4S6.7 5.8 6.7 9.5Q3.5 10.1 0.45 9.4Z" fill="url(#g1)" stroke="#275c9b" stroke-width=".75"/><path d="M4.9 9.5C4.8 6.2 6 4 8.2 4S11.9 6.3 11.65 9.5Q8.3 10.2 4.9 9.4Z" fill="url(#g1)" stroke="#275c9b" stroke-width=".75"/><circle cx="4.1" cy="1.95" r="1.6" fill="#3aa6e2" stroke="#2a5f9f" stroke-width=".7"/><circle cx="8" cy="1.95" r="1.6" fill="#3aa6e2" stroke="#2a5f9f" stroke-width=".7"/></svg><span class="t " style="left:98px">ether25</span><span class="t " style="left:197px">br.0</span><span class="t " style="left:264px">no</span><span class="t r n" style="right:605px">80</span><span class="t r n" style="right:544.6px">10</span><span class="t " style="left:430px">yes</span><span class="t r n" style="right:404px">5</span><span class="t " style="left:570.5px">yes</span><span class="t " style="left:670.5px">yes</span><span class="t " style="left:771px">designated port</span></div>
<div class="row" style="top:609px"><span class="t r n" style="right:942.4px">14</span><span class="t " style="left:31.5px">DH</span><svg class="ic" style="left:82px" width="13" height="11" viewBox="0 0 13 11"><path d="M0.45 9.5C0.2 6.4 1.6 4 3.7 4S6.7 5.8 6.7 9.5Q3.5 10.1 0.45 9.4Z" fill="url(#g1)" stroke="#275c9b" stroke-width=".75"/><path d="M4.9 9.5C4.8 6.2 6 4 8.2 4S11.9 6.3 11.65 9.5Q8.3 10.2 4.9 9.4Z" fill="url(#g1)" stroke="#275c9b" stroke-width=".75"/><circle cx="4.1" cy="1.95" r="1.6" fill="#3aa6e2" stroke="#2a5f9f" stroke-width=".7"/><circle cx="8" cy="1.95" r="1.6" fill="#3aa6e2" stroke="#2a5f9f" stroke-width=".7"/></svg><span class="t " style="left:98px">ether24</span><span class="t " style="left:197px">br.0</span><span class="t " style="left:264px">no</span><span class="t r n" style="right:605px">80</span><span class="t r n" style="right:544.6px">10</span><span class="t " style="left:430px">yes</span><span class="t r n" style="right:404px">5</span><span class="t " style="left:570.5px">yes</span><span class="t " style="left:670.5px">yes</span><span class="t " style="left:771px">designated port</span></div>
<div class="row" style="top:624px"><span class="t r n" style="right:942.4px">13</span><span class="t " style="left:31.5px">DH</span><svg class="ic" style="left:82px" width="13" height="11" viewBox="0 0 13 11"><path d="M0.45 9.5C0.2 6.4 1.6 4 3.7 4S6.7 5.8 6.7 9.5Q3.5 10.1 0.45 9.4Z" fill="url(#g1)" stroke="#275c9b" stroke-width=".75"/><path d="M4.9 9.5C4.8 6.2 6 4 8.2 4S11.9 6.3 11.65 9.5Q8.3 10.2 4.9 9.4Z" fill="url(#g1)" stroke="#275c9b" stroke-width=".75"/><circle cx="4.1" cy="1.95" r="1.6" fill="#3aa6e2" stroke="#2a5f9f" stroke-width=".7"/><circle cx="8" cy="1.95" r="1.6" fill="#3aa6e2" stroke="#2a5f9f" stroke-width=".7"/></svg><span class="t " style="left:98px">ether23</span><span class="t " style="left:197px">br.0</span><span class="t " style="left:264px">no</span><span class="t r n" style="right:605px">80</span><span class="t r n" style="right:544.6px">10</span><span class="t " style="left:430px">yes</span><span class="t r n" style="right:404px">5</span><span class="t " style="left:570.5px">yes</span><span class="t " style="left:670.5px">yes</span><span class="t " style="left:771px">designated port</span></div>
<div class="row" style="top:639px"><span class="t r n" style="right:942.4px">12</span><span class="t " style="left:31.5px">DH</span><svg class="ic" style="left:82px" width="13" height="11" viewBox="0 0 13 11"><path d="M0.45 9.5C0.2 6.4 1.6 4 3.7 4S6.7 5.8 6.7 9.5Q3.5 10.1 0.45 9.4Z" fill="url(#g1)" stroke="#275c9b" stroke-width=".75"/><path d="M4.9 9.5C4.8 6.2 6 4 8.2 4S11.9 6.3 11.65 9.5Q8.3 10.2 4.9 9.4Z" fill="url(#g1)" stroke="#275c9b" stroke-width=".75"/><circle cx="4.1" cy="1.95" r="1.6" fill="#3aa6e2" stroke="#2a5f9f" stroke-width=".7"/><circle cx="8" cy="1.95" r="1.6" fill="#3aa6e2" stroke="#2a5f9f" stroke-width=".7"/></svg><span class="t " style="left:98px">ether22</span><span class="t " style="left:197px">br.0</span><span class="t " style="left:264px">no</span><span class="t r n" style="right:605px">80</span><span class="t r n" style="right:544.6px">10</span><span class="t " style="left:430px">yes</span><span class="t r n" style="right:404px">5</span><span class="t " style="left:570.5px">yes</span><span class="t " style="left:670.5px">yes</span><span class="t " style="left:771px">designated port</span></div>
<div class="row" style="top:654px"><span class="t r n" style="right:942.4px">11</span><span class="t " style="left:31.5px">DH</span><svg class="ic" style="left:82px" width="13" height="11" viewBox="0 0 13 11"><path d="M0.45 9.5C0.2 6.4 1.6 4 3.7 4S6.7 5.8 6.7 9.5Q3.5 10.1 0.45 9.4Z" fill="url(#g1)" stroke="#275c9b" stroke-width=".75"/><path d="M4.9 9.5C4.8 6.2 6 4 8.2 4S11.9 6.3 11.65 9.5Q8.3 10.2 4.9 9.4Z" fill="url(#g1)" stroke="#275c9b" stroke-width=".75"/><circle cx="4.1" cy="1.95" r="1.6" fill="#3aa6e2" stroke="#2a5f9f" stroke-width=".7"/><circle cx="8" cy="1.95" r="1.6" fill="#3aa6e2" stroke="#2a5f9f" stroke-width=".7"/></svg><span class="t " style="left:98px">ether21</span><span class="t " style="left:197px">br.0</span><span class="t " style="left:264px">no</span><span class="t r n" style="right:605px">80</span><span class="t r n" style="right:544.6px">10</span><span class="t " style="left:430px">yes</span><span class="t r n" style="right:404px">5</span><span class="t " style="left:570.5px">yes</span><span class="t " style="left:670.5px">yes</span><span class="t " style="left:771px">designated port</span></div>
<div class="hl" style="top:669px"></div>
<div style="left:948px;top:83px;width:1px;height:588px;background:#a0a0a0"></div>
<div style="left:949px;top:83px;width:14px;height:16px;background:#f0f0f0;border-top:1px solid #fff;border-left:1px solid #fff"></div>
<svg style="left:949px;top:83px" width="14" height="16" viewBox="0 0 14 16"><path d="M2.5 5.5h10l-5 5.5z" fill="#000"/></svg>
<div style="left:949px;top:100px;width:14px;height:571px;background:#f0f0f0"></div>
<div style="left:949px;top:100px;width:14px;height:14px;background:#f0f0f0;border-top:1px solid #fff;border-left:1px solid #fff"></div>
<div style="left:949px;top:114px;width:14px;height:1px;background:#a0a0a0"></div>
<svg style="left:949px;top:100px" width="14" height="14" viewBox="0 0 14 14"><path d="M7 3.6L11.2 7.8H9V11H5V7.8H2.8Z" fill="#000"/></svg>
<div style="left:949px;top:115px;width:14px;height:71px;background:#d9d9d9;border-left:1px solid #e4e4e4;border-top:1px solid #e4e4e4;border-right:1px solid #ececec"></div>
<div style="left:949px;top:186px;width:14px;height:1px;background:#a0a0a0"></div>
<div style="left:949px;top:187px;width:14px;height:457px;background:#f0f0f0;border-left:1px solid #fff;border-top:1px solid #fff;border-right:1px solid #dcdcdc"></div>
<div style="left:949px;top:644px;width:14px;height:1px;background:#a0a0a0"></div>
<div style="left:949px;top:645px;width:14px;height:11px;background:#d9d9d9;border-right:1px solid #e6e6e6"></div>
<div style="left:949px;top:656px;width:14px;height:1px;background:#a0a0a0"></div>
<div style="left:949px;top:657px;width:14px;height:14px;background:#f0f0f0;border-top:1px solid #fff;border-left:1px solid #fff"></div>
<svg style="left:949px;top:657px" width="14" height="14" viewBox="0 0 14 14"><path d="M5 4H9V7.2H11.2L7 11.4L2.8 7.2H5Z" fill="#000"/></svg>
<span class="t" style="left:8px;top:674px">45 items (1 selected)</span>
<svg style="left:0;top:0" width="970" height="699" viewBox="0 0 970 699" fill="#e5392e"><path d="M124.3 96.7L149.7 79.2L146.4 91.6L290.8 72.2A2 2 0 0 1 291.6 76L147.2 95.9L153.3 106.8Z"/><path d="M118.2 137L147.2 126.9L141 137.8L332.4 163.9A2 2 0 0 1 331.8 167.9L140.3 142L143.8 154.2Z"/><path d="M123.5 226.6L149.9 210.6L145.5 222L244 213.8A2 2 0 0 1 244.4 217.8L146.4 226.3L151.5 237.6Z"/><path d="M145.5 311.9L172.6 298.2L168 308.7L290.6 307.5A2 2 0 0 1 290.7 311.5L168 313.2L172.6 325.1Z"/></svg>
</body></html>
